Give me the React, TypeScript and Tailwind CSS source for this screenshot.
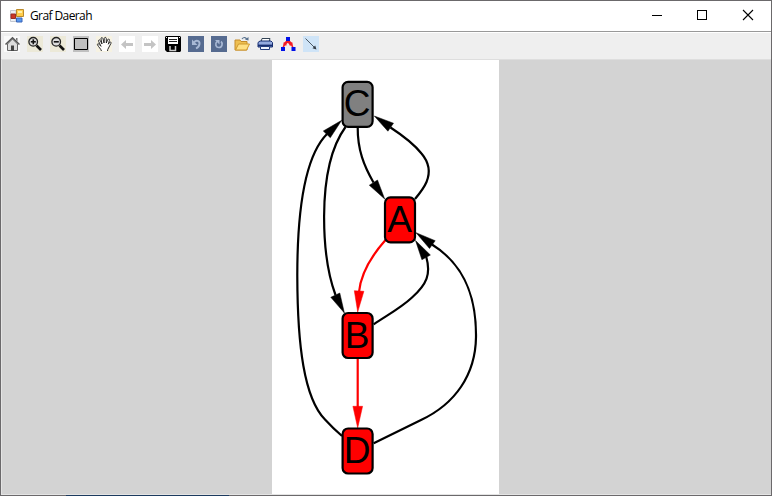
import type { ReactNode } from "react";

type IconProps = { bg?: string; label: string; children: ReactNode };

function ToolIcon({ bg = "", label, children }: IconProps) {
  return (
    <button aria-label={label} className={`size-4 shrink-0 ${bg}`}>
      <svg viewBox="0 0 16 16" className="block size-4">{children}</svg>
    </button>
  );
}

function Magnifier({ plus = false }: { plus?: boolean }) {
  return (
    <>
      <path d="M9.5 9.5 14 14" stroke="#111" strokeWidth="2.6" />
      <circle cx="6.2" cy="5.8" r="4.3" fill="#dcdcdc" stroke="#222" strokeWidth="1.3" />
      <path d="M3.8 5.8h5" stroke="#111" strokeWidth="1.6" />
      {plus && <path d="M6.3 3.3v5" stroke="#111" strokeWidth="1.6" />}
    </>
  );
}

function Toolbar() {
  return (
    <div className="flex h-[27px] shrink-0 items-start gap-[7px] border-b border-[#dedede] bg-[#efefef] pt-[3px] pl-[3px]">
      <ToolIcon label="Home" bg="bg-[#fafafa]">
        <path d="M3.500 8V14.500h10V8l-5-5Z" fill="#dedede" stroke="#666" />
        <path d="M1.500 8.500 8.500 1.800l7 6.700" fill="none" stroke="#555" strokeWidth="1.500" />
        <path d="M12 2h1.500v3.500L12 4Z" fill="#777" />
        <path d="M7 9.500h3V15H7z" fill="#444" />
      </ToolIcon>
      <ToolIcon label="Zoom in" bg="bg-[#ece9d8]"><Magnifier plus /></ToolIcon>
      <ToolIcon label="Zoom out" bg="bg-[#ece9d8]"><Magnifier /></ToolIcon>
      <ToolIcon label="Window zoom" bg="bg-[#c0c0c0]">
        <path d="M1.500 2.500h13v11h-13z" fill="none" stroke="#000" />
      </ToolIcon>
      <ToolIcon label="Pan" bg="bg-[#f6f2e2]">
        <path d="M5.500 15C5 13 2.500 11 1.500 8.800c-.3-1.300 1-1.500 2 0L5 10.300 2.700 5.500C2 4 3.500 3.200 4.300 4.600L6 8 5 3C4.700 1.300 6.600 1 7 2.700L8 7l.3-4.500c.2-1.600 2-1.400 2 .2L10.300 7l1.300-3.200c.7-1.400 2.200-.8 1.800.7L12.300 8.200l1.200-1.700c.8-1 2-.3 1.400 1L12.500 12c-.7 1.200-1 2-1 3" fill="#fff" stroke="#222" strokeWidth="0.950" />
      </ToolIcon>
      <ToolIcon label="Back" bg="bg-white">
        <path d="M2 8.500 7 4v3h7v3H7v3Z" fill="#c4c4c4" />
      </ToolIcon>
      <ToolIcon label="Forward" bg="bg-white">
        <path d="M14 8.500 9 4v3H2v3h7v3Z" fill="#c4c4c4" />
      </ToolIcon>
      <ToolIcon label="Save">
        <path d="M1 0h14l1 1v14l-1 1H2l-2-2V1Z" fill="#000" />
        <path d="M3 1h10v7H3z" fill="#fff" />
        <path d="M4 3.500h8M4 5.500h8" stroke="#222" />
        <path d="M4 10h8v5H4z" fill="#000" />
        <path d="M5 10v4.500h5.500V10" fill="none" stroke="#ccc" strokeWidth="1.500" />
        <path d="M1 1h1v1H1zM14 1h1v1h-1z" fill="#eee" />
      </ToolIcon>
      <ToolIcon label="Undo" bg="bg-[#566b90]">
        <path d="M4 3.500V9h5.500Z" fill="#a9b9d5" />
        <path d="M6 6.500C8 3.500 12 4.500 11.500 8c-.3 2-1.500 3.500-3.500 4.500" fill="none" stroke="#a9b9d5" strokeWidth="1.900" />
      </ToolIcon>
      <ToolIcon label="Redo" bg="bg-[#566b90]">
        <path d="M4 4h4.500v4.500Z" fill="#a9b9d5" />
        <path d="M6 5.500C3.500 8 5 11.500 8 11.500S12.200 7.500 10 5.500" fill="none" stroke="#a9b9d5" strokeWidth="1.700" />
      </ToolIcon>
      <ToolIcon label="Open">
        <path d="M1 14V4h5l1 1.500h6V14Z" fill="#eebf51" stroke="#c38b2a" />
        <path d="m1.500 14 3-6h11l-3 6Z" fill="#ffe083" stroke="#cf982e" />
        <path d="M8 3c2-2.500 4-1.500 5 .5" fill="none" stroke="#58718e" strokeWidth="1.200" />
        <path d="m11 3.500 3.500 1V1Z" fill="#58718e" />
      </ToolIcon>
      <ToolIcon label="Print">
        <path d="m4 6 1-3.500h8L12 6Z" fill="#fff" stroke="#345" />
        <path d="M1 6.500 3 5h11l1.500 1.500V11H1Z" fill="#94abe0" stroke="#172e71" />
        <path d="M1 9.500h14.500" stroke="#172e71" strokeWidth="1.800" />
        <path d="M3.500 10.500h9v3h-9z" fill="#f1f5ff" stroke="#263e7e" />
      </ToolIcon>
      <ToolIcon label="Layout">
        <path d="M8 4 5 7 3 12M8 4l3 3 2 5M5 8l3-2 3 3" fill="none" stroke="#f21b25" strokeWidth="1.500" />
        <path d="M6 1h4v4H6zM1 11h4v4H1zM11.500 11h4v4h-4z" fill="#0010e8" />
        <path d="M3.500 6.500h3v3h-3zM9.500 6.500h3v3h-3z" fill="#f21b25" />
      </ToolIcon>
      <ToolIcon label="Edge" bg="bg-[#cfe4f7]">
        <path d="m2.500 2.500 10 10" stroke="#3c4854" strokeWidth="0.900" />
        <path d="m13.500 13.500-1.300-4-2.700 2.700Z" fill="#303b46" />
      </ToolIcon>
    </div>
  );
}

type NodeProps = { name: string; x: number; y: number; fill: string };

function GraphNode({ name, x, y, fill }: NodeProps) {
  return (
    <g>
      <rect x={x - 15} y={y - 22.5} width="30" height="45" rx="5.500" fill={fill} stroke="#000" strokeWidth="2.200" />
      <text x={x - 0.5} y={y + 12} textAnchor="middle" className="font-['Liberation_Sans',Arial,sans-serif] text-[37px]">{name}</text>
    </g>
  );
}

const edges = [
  { d: "M357.700 127C357.500 150 364 166 373.500 182.500", tip: "384.700,199 369.300,185.200 377.500,180", color: "#000" },
  { d: "M415 199C420 193 424 188 426.500 182C431.500 170 427 160 421.500 153.500C413.500 143.500 402 135 390.500 127.500", tip: "374.300,116 393.500,123.200 387.900,131.200", color: "#000" },
  { d: "M342 436C335 430 330 425 325 419.500C304 398 297.500 345 297.300 277C297.200 230 301 160 327 134", tip: "341.700,120.300 323.300,131 330.300,137.700", color: "#000" },
  { d: "M345.500 127C331 147 324.300 180 324.100 216C324 247 327 272 335.500 295", tip: "344.400,313 330.800,297.300 339.800,293", color: "#000" },
  { d: "M385.500 240C374 253 361 272 359 292", tip: "357.700,312 354.300,290.700 363.900,291.300", color: "#f00" },
  { d: "M373.700 324.300C390 313.500 402 307 412 297.500C427 284 431 274 426.300 257", tip: "415.500,240.500 421.900,259.700 430.400,255", color: "#000" },
  { d: "M373.700 443.300L421 420C455 404 475.500 375 476 337C476.500 290 460 262 432 244.500", tip: "416,232.700 435.200,240.700 429.500,248.500", color: "#000" },
  { d: "M357.700 359V408", tip: "357.700,428 352.900,406.300 362.600,406.300", color: "#f00" },
];

function Graph() {
  return (
    <svg width="227" height="434" viewBox="272 60 227 434" className="block w-[227px] shrink-0 bg-white">
      {edges.map((e) => (
        <g key={e.d}>
          <path d={e.d} fill="none" stroke={e.color} strokeWidth="2.200" />
          <polygon points={e.tip} fill={e.color} stroke={e.color} strokeWidth="0.500" />
        </g>
      ))}
      <GraphNode name="C" x={357.6} y={104.3} fill="#808080" />
      <GraphNode name="A" x={400} y={219.9} fill="#ff0000" />
      <GraphNode name="B" x={357.6} y={335.5} fill="#ff0000" />
      <GraphNode name="D" x={357.6} y={451} fill="#ff0000" />
    </svg>
  );
}

export default function App() {
  return (
    <div className="flex h-[496px] w-[772px] flex-col overflow-hidden border border-b-0 border-[#6b696b] bg-white">
      <header className="flex h-[30px] shrink-0 items-center pl-[9px]">
        <svg width="14" height="14" viewBox="0 0 14 14" className="shrink-0">
          <path d="M.500 1.500H6v11H.500z" fill="#eef0f4" stroke="#c3c8d0" />
          <path d="M1 5h4.500v4.500H1z" fill="#cc3524" stroke="#962d28" />
          <path d="M6.500.500h7v7h-7z" fill="#ffcd4c" stroke="#ba8a2c" />
          <path d="M8 2h4v2H8z" fill="#fff0a8" />
          <path d="M6.500 9h5.500v4H6.500z" fill="#5798ee" stroke="#3a65b8" />
        </svg>
        <span className="ml-[6px] font-['Open_Sans','Noto_Sans',sans-serif] text-[12px] leading-4 tracking-[-0.6px] text-black">Graf Daerah</span>
        <div className="ml-auto flex items-center">
          <svg width="46" height="30" viewBox="0 0 46 30" shapeRendering="crispEdges"><path d="M19 14.500h10" stroke="#000" /></svg>
          <svg width="46" height="30" viewBox="0 0 46 30" shapeRendering="crispEdges"><path d="M18.500 9.500h9v9h-9z" fill="none" stroke="#000" /></svg>
          <svg width="46" height="30" viewBox="0 0 46 30"><path d="m18 9 10 10M28 9 18 19" stroke="#000" strokeWidth="1.100" /></svg>
        </div>
      </header>
      <div className="h-px shrink-0 bg-[#999]" />
      <div className="h-px shrink-0 bg-white" />
      <Toolbar />
      <main className="flex min-h-0 flex-1 border-b border-l border-[#e4e4e4] bg-[#d3d3d3] pl-[270px]">
        <Graph />
      </main>
      <footer className="flex h-px shrink-0 bg-[#6b696b] pl-[65px]">
        <div className="h-px w-[163px] bg-[#1c3a5e]" />
      </footer>
    </div>
  );
}
